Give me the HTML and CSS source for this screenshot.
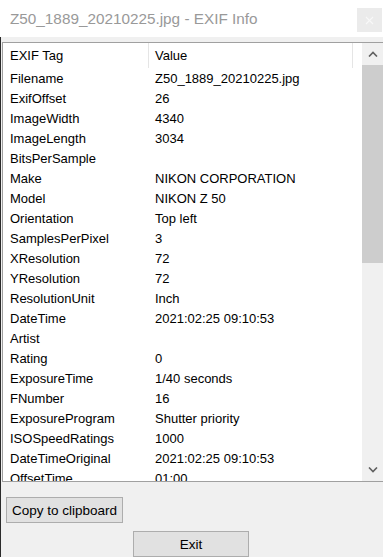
FILE: index.html
```html
<!DOCTYPE html>
<html lang="en">
<head>
    <meta charset="UTF-8">
    <meta name="viewport" content="width=device-width, initial-scale=1.0">
    <title>EXIF Info</title>
    <link rel="stylesheet" href="styles.css">
</head>
<body>
    <div class="window">
        <div class="titlebar">
            <span class="title">Z50_1889_20210225.jpg - EXIF Info</span>
            <span class="close">
                <svg width="9" height="9" viewBox="0 0 9 9"><path d="M1 1 L8 8 M8 1 L1 8" stroke="#f8f8f8" stroke-width="1.1"/></svg>
            </span>
        </div>

        <div class="content">
            <!-- EXIF list view -->
            <div class="listview">
                <div class="table">
                    <div class="row head">
                        <div class="cell tag">EXIF Tag</div>
                        <div class="cell value">Value</div>
                        <div class="cell filler"></div>
                    </div>
                    <div class="row"><div class="cell tag">Filename</div><div class="cell value">Z50_1889_20210225.jpg</div></div>
                    <div class="row"><div class="cell tag">ExifOffset</div><div class="cell value">26</div></div>
                    <div class="row"><div class="cell tag">ImageWidth</div><div class="cell value">4340</div></div>
                    <div class="row"><div class="cell tag">ImageLength</div><div class="cell value">3034</div></div>
                    <div class="row"><div class="cell tag">BitsPerSample</div><div class="cell value"></div></div>
                    <div class="row"><div class="cell tag">Make</div><div class="cell value">NIKON CORPORATION</div></div>
                    <div class="row"><div class="cell tag">Model</div><div class="cell value">NIKON Z 50</div></div>
                    <div class="row"><div class="cell tag">Orientation</div><div class="cell value">Top left</div></div>
                    <div class="row"><div class="cell tag">SamplesPerPixel</div><div class="cell value">3</div></div>
                    <div class="row"><div class="cell tag">XResolution</div><div class="cell value">72</div></div>
                    <div class="row"><div class="cell tag">YResolution</div><div class="cell value">72</div></div>
                    <div class="row"><div class="cell tag">ResolutionUnit</div><div class="cell value">Inch</div></div>
                    <div class="row"><div class="cell tag">DateTime</div><div class="cell value">2021:02:25 09:10:53</div></div>
                    <div class="row"><div class="cell tag">Artist</div><div class="cell value"></div></div>
                    <div class="row"><div class="cell tag">Rating</div><div class="cell value">0</div></div>
                    <div class="row"><div class="cell tag">ExposureTime</div><div class="cell value">1/40 seconds</div></div>
                    <div class="row"><div class="cell tag">FNumber</div><div class="cell value">16</div></div>
                    <div class="row"><div class="cell tag">ExposureProgram</div><div class="cell value">Shutter priority</div></div>
                    <div class="row"><div class="cell tag">ISOSpeedRatings</div><div class="cell value">1000</div></div>
                    <div class="row"><div class="cell tag">DateTimeOriginal</div><div class="cell value">2021:02:25 09:10:53</div></div>
                    <div class="row"><div class="cell tag">OffsetTime</div><div class="cell value">01:00</div></div>
                </div>

                <div class="scrollbar">
                    <div class="arrow">
                        <svg width="10" height="6" viewBox="0 0 10 6"><path d="M1 5.5 L5 1.5 L9 5.5" fill="none" stroke="#606060" stroke-width="1.6"/></svg>
                    </div>
                    <div class="track"><div class="thumb"></div></div>
                    <div class="arrow">
                        <svg width="10" height="6" viewBox="0 0 10 6"><path d="M1 0.5 L5 4.5 L9 0.5" fill="none" stroke="#606060" stroke-width="1.6"/></svg>
                    </div>
                </div>
            </div>

            <div class="actions">
                <button class="btn copy">Copy to clipboard</button>
                <button class="btn exit">Exit</button>
            </div>
        </div>
    </div>
</body>
</html>
```

FILE: styles.css
```css
html, body {
    margin: 0;
    padding: 0;
    background: #f0f0f0;
}
body {
    font-family: "Liberation Sans", Arial, sans-serif;
    font-size: 13px;
    color: #000;
}
.window {
    width: 383px;
    height: 557px;
    overflow: hidden;
    display: flex;
    flex-direction: column;
}
.titlebar {
    height: 37px;
    background: #fff;
    display: flex;
    justify-content: space-between;
    align-items: flex-start;
}
.title {
    line-height: 37px;
    padding-left: 10px;
    font-size: 15.3px;
    color: #999;
}
.close {
    width: 25px;
    height: 24px;
    margin: 8px 1px 0 0;
    background: #ebebeb;
    display: flex;
    align-items: center;
    justify-content: center;
}
.content {
    flex: 1;
    background: #f0f0f0;
    border-left: 1px solid #2b2b2b;
    padding-top: 5px;
}
.listview {
    margin-left: 1px;
    height: 440px;
    box-sizing: border-box;
    border: 1px solid #a0a0a0;
    border-right: none;
    background: #fff;
    display: flex;
    overflow: hidden;
}
.table {
    flex: 1;
    overflow: hidden;
}
.row {
    display: grid;
    grid-template-columns: 146px 204px 1fr;
    height: 20px;
    line-height: 21px;
}
.row.head {
    height: 25px;
    line-height: 25px;
}
.cell {
    white-space: nowrap;
    overflow: hidden;
}
.tag {
    padding-left: 7px;
}
.value {
    padding-left: 6px;
}
.head .cell {
    border-right: 1px solid #e5e5e5;
}
.head .filler {
    border-right: none;
}
.scrollbar {
    width: 21px;
    background: #f0f0f0;
    display: flex;
    flex-direction: column;
}
.arrow {
    height: 22px;
    display: flex;
    align-items: center;
    justify-content: center;
}
.track {
    flex: 1;
}
.thumb {
    height: 198px;
    background: #cdcdcd;
}
.actions {
    display: flex;
    flex-direction: column;
    align-items: flex-start;
    padding: 15px 0 0 5px;
}
.btn {
    font-family: "Liberation Sans", Arial, sans-serif;
    font-size: 13.5px;
    color: #000;
    background: #e1e1e1;
    border: 1px solid #adadad;
    height: 26px;
    padding: 0;
    margin: 0;
}
.copy {
    width: 117px;
}
.exit {
    width: 116px;
    margin: 8px 0 0 127px;
}
```
